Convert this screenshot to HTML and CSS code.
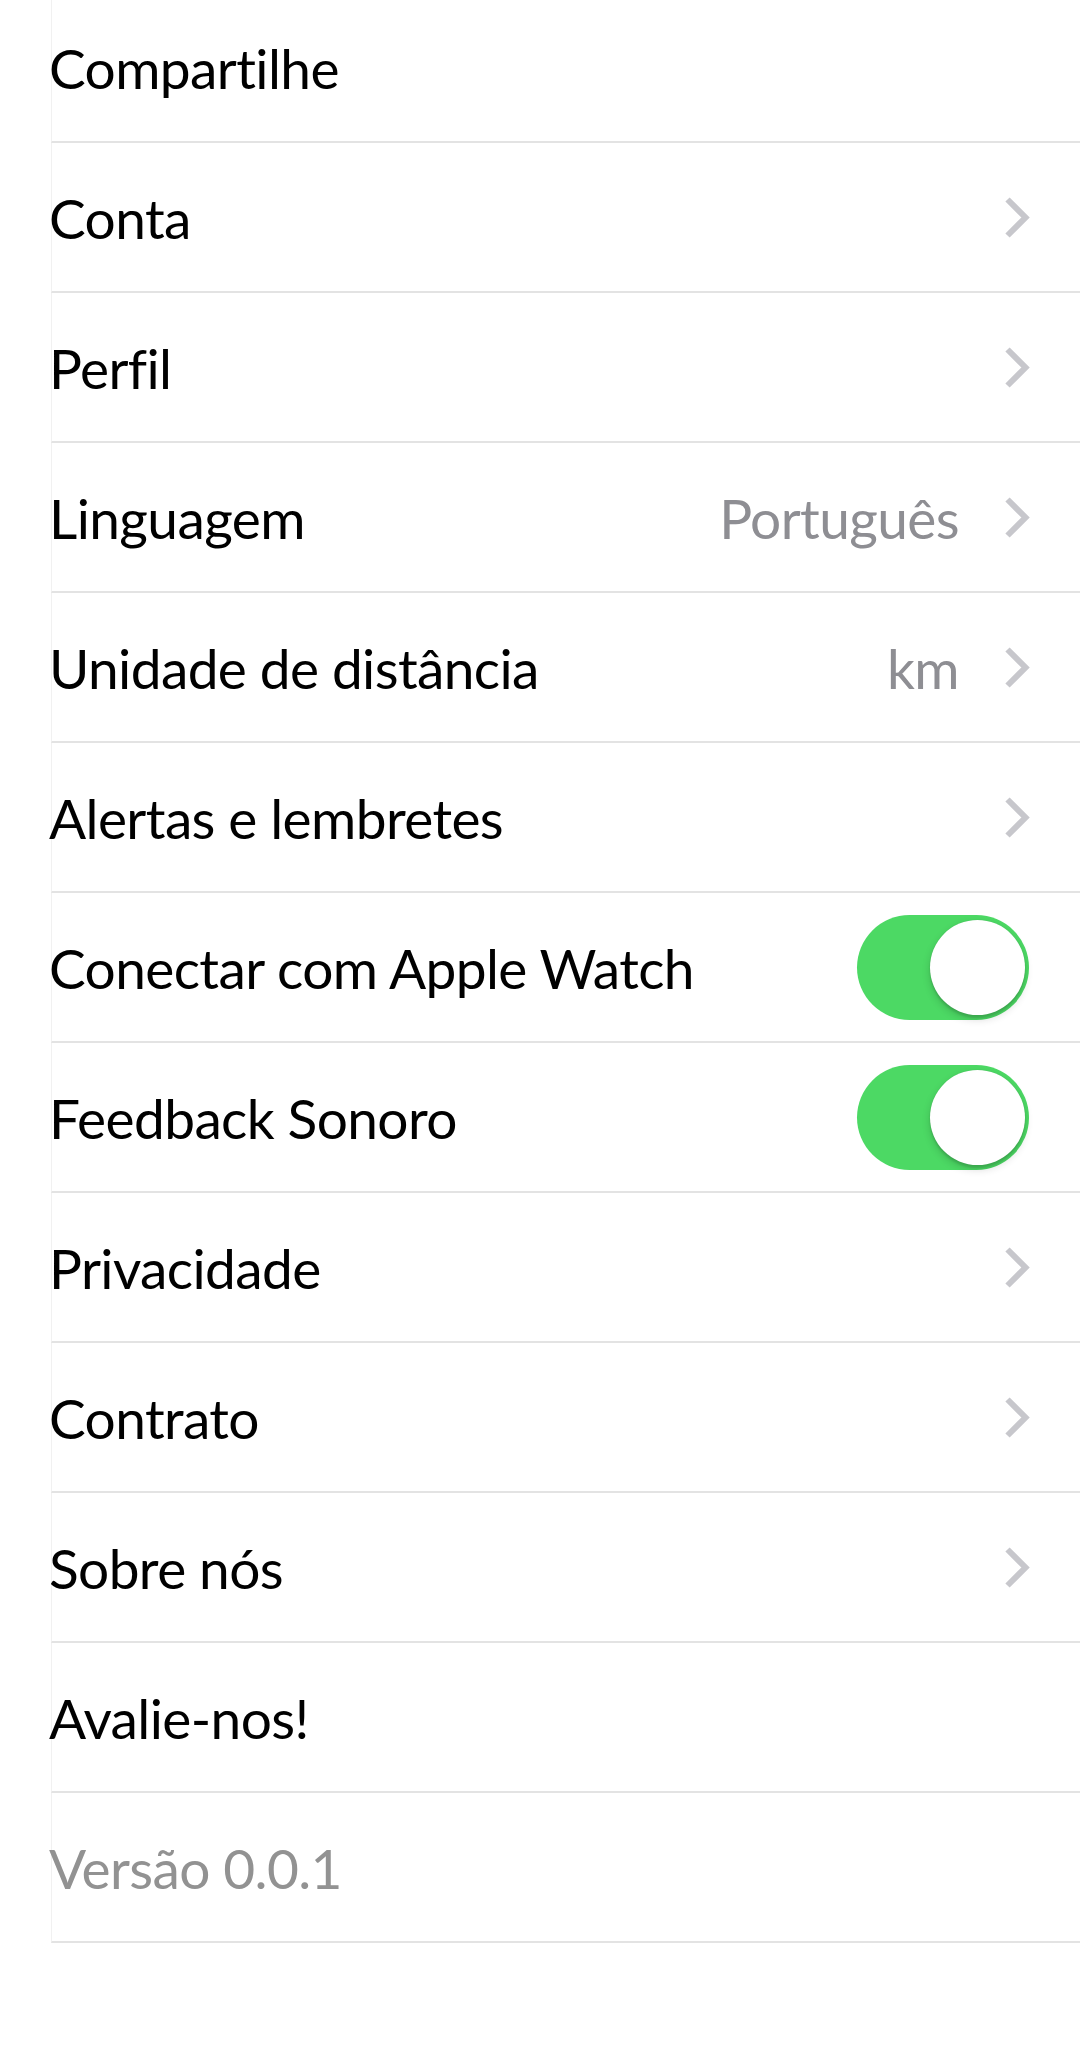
FILE: index.html
```html
<!DOCTYPE html>
<html lang="pt">
<head>
<meta charset="utf-8">
<link rel="stylesheet" href="styles.css">
</head>
<body>
<div class="list">
  <div class="row"><span class="label">Compartilhe</span></div>
  <div class="row"><span class="label">Conta</span><svg class="chev" viewBox="0 0 26 43"><polyline points="3.5,3.5 21.5,21.5 3.5,39.5"/></svg></div>
  <div class="row"><span class="label">Perfil</span><svg class="chev" viewBox="0 0 26 43"><polyline points="3.5,3.5 21.5,21.5 3.5,39.5"/></svg></div>
  <div class="row"><span class="label">Linguagem</span><span class="value">Português</span><svg class="chev" viewBox="0 0 26 43"><polyline points="3.5,3.5 21.5,21.5 3.5,39.5"/></svg></div>
  <div class="row"><span class="label">Unidade de distância</span><span class="value">km</span><svg class="chev" viewBox="0 0 26 43"><polyline points="3.5,3.5 21.5,21.5 3.5,39.5"/></svg></div>
  <div class="row"><span class="label">Alertas e lembretes</span><svg class="chev" viewBox="0 0 26 43"><polyline points="3.5,3.5 21.5,21.5 3.5,39.5"/></svg></div>
  <div class="row"><span class="label">Conectar com Apple Watch</span><span class="switch on"><span class="knob"></span></span></div>
  <div class="row"><span class="label">Feedback Sonoro</span><span class="switch on"><span class="knob"></span></span></div>
  <div class="row"><span class="label">Privacidade</span><svg class="chev" viewBox="0 0 26 43"><polyline points="3.5,3.5 21.5,21.5 3.5,39.5"/></svg></div>
  <div class="row"><span class="label">Contrato</span><svg class="chev" viewBox="0 0 26 43"><polyline points="3.5,3.5 21.5,21.5 3.5,39.5"/></svg></div>
  <div class="row"><span class="label">Sobre nós</span><svg class="chev" viewBox="0 0 26 43"><polyline points="3.5,3.5 21.5,21.5 3.5,39.5"/></svg></div>
  <div class="row"><span class="label">Avalie-nos!</span></div>
  <div class="row"><span class="label muted">Versão 0.0.1</span></div>
</div>
</body>
</html>
```
FILE: styles.css
```css
html, body {
  margin: 0;
  padding: 0;
  background: #ffffff;
}

body {
  font-family: Lato, "Open Sans", sans-serif;
  font-variant-ligatures: none;
  color: #000000;
}

.list {
  margin-top: -7px;
}

.row {
  box-sizing: border-box;
  height: 150px;
  margin-left: 51px;
  padding: 1px 50px 0 0;
  display: flex;
  align-items: center;
  border-bottom: 2px solid #e3e3e3;
  border-left: 1px solid #f1f1f1;
}

.label {
  font-size: 55px;
  letter-spacing: -0.6px;
  white-space: nowrap;
  flex: 1;
  margin-left: -3px;
}

.label.muted {
  color: #929292;
}

.value {
  font-size: 55px;
  letter-spacing: -0.6px;
  color: #8e8e93;
  margin-right: 45px;
  white-space: nowrap;
}

.chev {
  width: 26px;
  height: 43px;
  flex: none;
  margin-top: -1px;
}

.chev polyline {
  fill: none;
  stroke: #c7c7cc;
  stroke-width: 6;
  stroke-linecap: butt;
  stroke-linejoin: miter;
}

.switch {
  position: relative;
  flex: none;
  width: 172px;
  height: 105px;
  border-radius: 53px;
  background: #4cd964;
  margin-right: 1px;
  margin-top: -1px;
}

.knob {
  position: absolute;
  top: 5px;
  right: 4px;
  width: 95px;
  height: 95px;
  border-radius: 50%;
  background: #ffffff;
  box-shadow: 0 4px 8px rgba(0, 0, 0, 0.16), 0 3px 2px rgba(0, 0, 0, 0.1), 0 0 1px rgba(0, 0, 0, 0.15);
}
```
